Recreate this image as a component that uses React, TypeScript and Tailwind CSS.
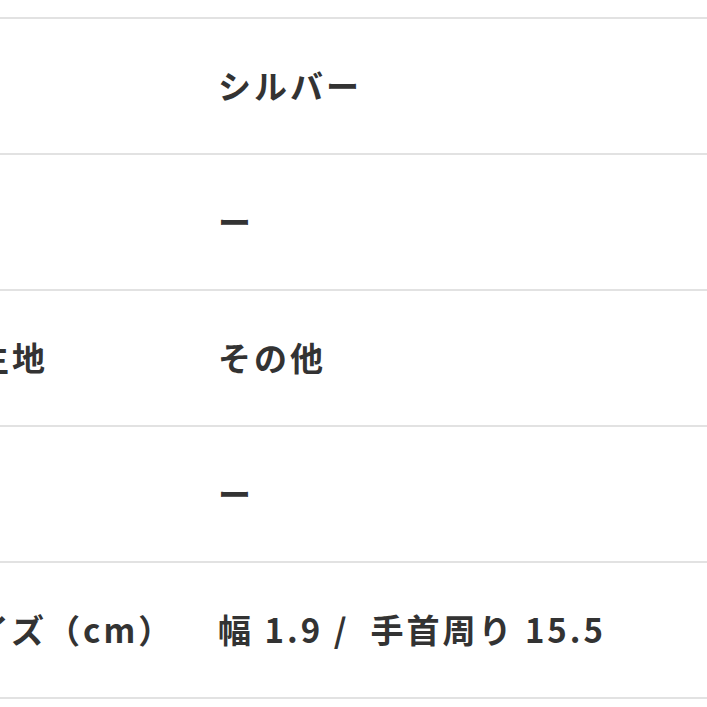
import React from 'react';

const rows = [
  { label: '色', value: 'シルバー' },
  { label: '柄', value: 'ー' },
  { label: '表生地', value: 'その他' },
  { label: '石', value: 'ー' },
  { label: 'サイズ（cm）', value: '幅 1.9 /  手首周り 15.5' },
];

const App: React.FC = () => {
  return (
    <div
      className="w-[707px] h-[707px] overflow-hidden bg-white text-[#333333]"
      style={{ fontFamily: '"Noto Sans CJK JP", "Noto Sans", sans-serif' }}
    >
      <div className="mt-[17px] -ml-[60px] w-[800px] border-t-2 border-[#e2e2e2]">
        {rows.map((row, i) => (
          <div key={i} className="flex items-center h-[136px] border-b-2 border-[#e2e2e2]">
            <div className="w-[278px] shrink-0 text-[33px] font-bold tracking-[3px] whitespace-pre">
              {row.label}
            </div>
            <div className="text-[33px] font-bold tracking-[3px] whitespace-pre">{row.value}</div>
          </div>
        ))}
      </div>
    </div>
  );
};

export default App;
